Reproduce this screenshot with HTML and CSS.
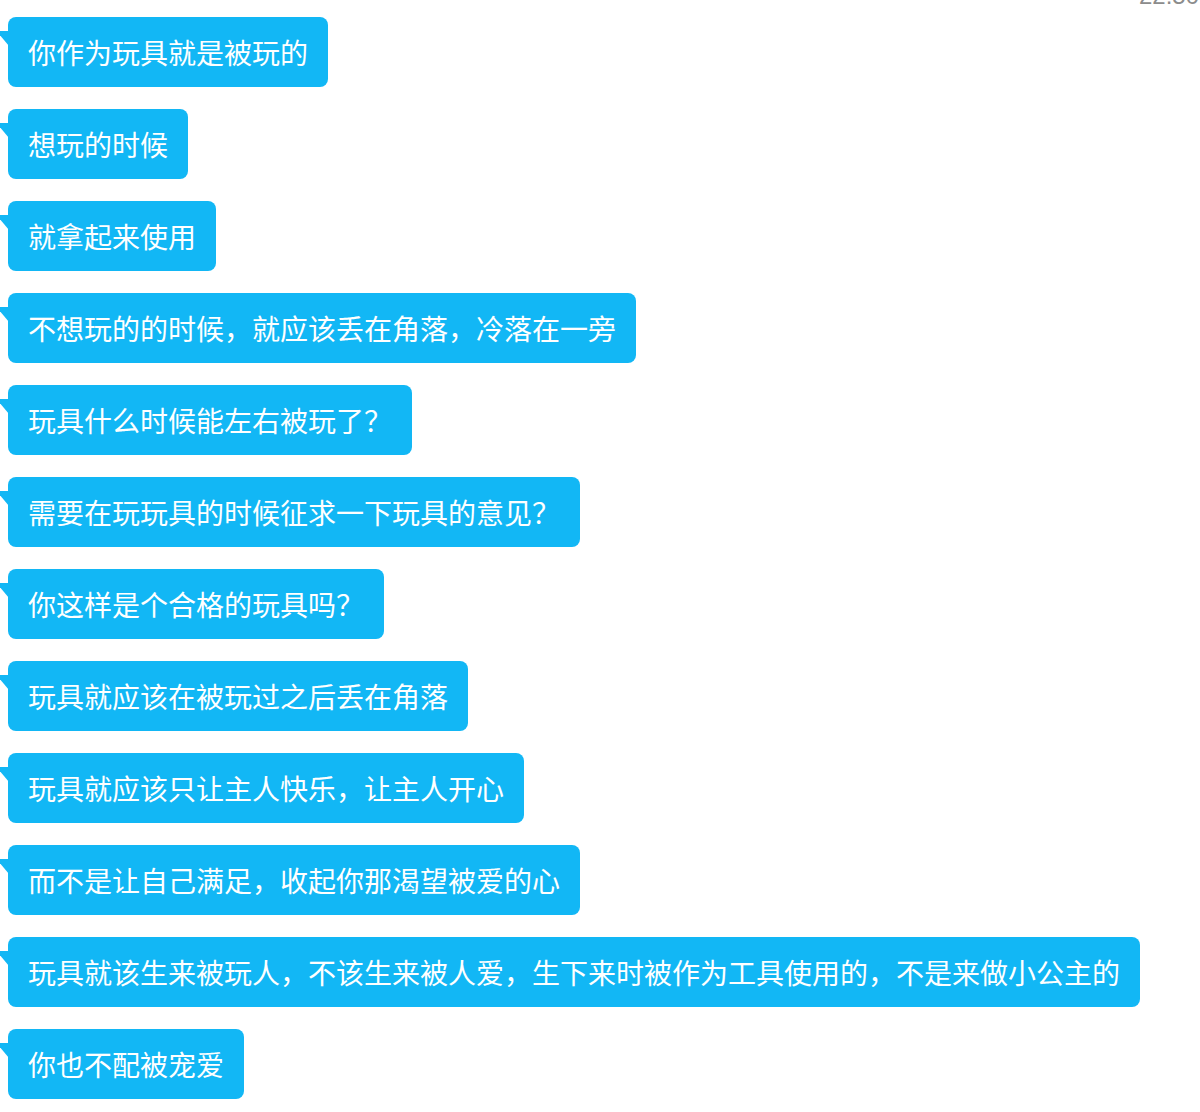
FILE: index.html
```html
<!DOCTYPE html>
<html>
<head><title>聊天记录</title>
<meta charset="utf-8">
<link rel="stylesheet" href="styles.css">
</head>
<body>
<div class="time-row"><span class="time">22:50</span></div>
<div class="chat">
  <div class="msg"><span class="bubble">你作为玩具就是被玩的</span></div>
  <div class="msg"><span class="bubble">想玩的时候</span></div>
  <div class="msg"><span class="bubble">就拿起来使用</span></div>
  <div class="msg"><span class="bubble">不想玩的的时候，就应该丢在角落，冷落在一旁</span></div>
  <div class="msg"><span class="bubble">玩具什么时候能左右被玩了？</span></div>
  <div class="msg"><span class="bubble">需要在玩玩具的时候征求一下玩具的意见？</span></div>
  <div class="msg"><span class="bubble">你这样是个合格的玩具吗？</span></div>
  <div class="msg"><span class="bubble">玩具就应该在被玩过之后丢在角落</span></div>
  <div class="msg"><span class="bubble">玩具就应该只让主人快乐，让主人开心</span></div>
  <div class="msg"><span class="bubble">而不是让自己满足，收起你那渴望被爱的心</span></div>
  <div class="msg"><span class="bubble">玩具就该生来被玩人，不该生来被人爱，生下来时被作为工具使用的，不是来做小公主的</span></div>
  <div class="msg"><span class="bubble">你也不配被宠爱</span></div>
</div>
</body>
</html>
```

FILE: styles.css
```css
html, body {
  margin: 0;
  padding: 0;
  background-color: #fff;
  overflow: hidden;
}

body {
  font-family: "Noto Sans CJK SC", "Liberation Sans", sans-serif;
}

.time-row {
  height: 0;
  padding-left: 1139px;
  white-space: nowrap;
}

.time {
  display: block;
  transform: translateY(-18px);
  font-family: "Liberation Sans", sans-serif;
  font-size: 24px;
  line-height: 28px;
  color: #8c8c8c;
}

.chat {
  display: flex;
  flex-direction: column;
  align-items: flex-start;
  gap: 22px;
  padding: 17px 0 0 8px;
}

.bubble {
  position: relative;
  display: inline-block;
  height: 70px;
  padding: 0 20px;
  line-height: 70px;
  font-size: 28px;
  color: #fff;
  white-space: nowrap;
  background-color: #12b7f5;
  border-radius: 8px;
}

.bubble::before {
  content: "";
  position: absolute;
  left: -8px;
  top: 14px;
  width: 9px;
  height: 15px;
  background-color: #12b7f5;
  clip-path: polygon(0 0, 100% 0, 100% 100%, 0 28%);
}
```
